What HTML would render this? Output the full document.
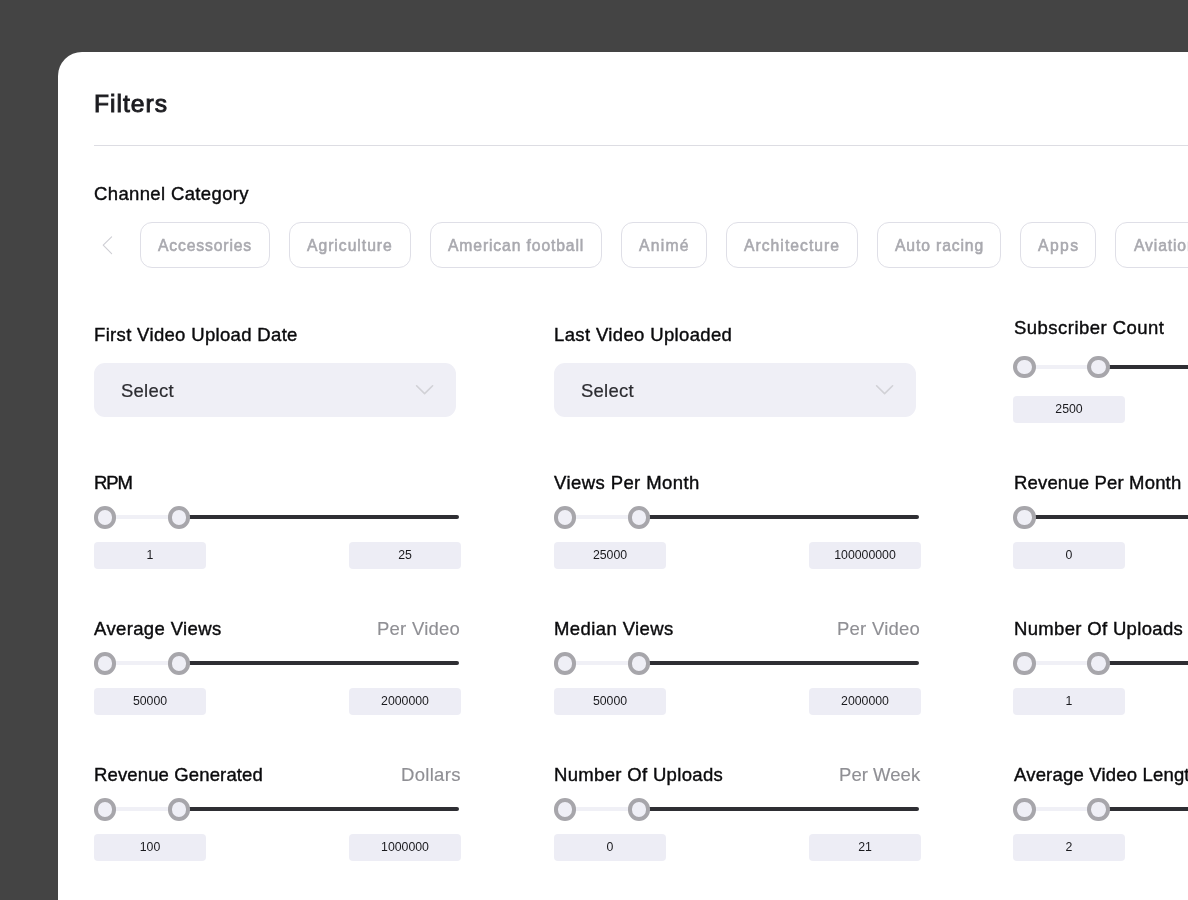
<!DOCTYPE html>
<html><head><meta charset="utf-8">
<style>
*{margin:0;padding:0;box-sizing:border-box}
html,body{width:1188px;height:900px;overflow:hidden;background:#444444;font-family:"Liberation Sans",sans-serif;}
.card{position:absolute;left:58px;top:52px;width:1200px;height:900px;background:#fff;border-radius:24px 0 0 0;}
.abs{position:absolute;white-space:nowrap}
.t{position:absolute;white-space:nowrap;will-change:transform}
.hr{position:absolute;left:94px;top:145px;width:1100px;height:1px;background:#dddde3}
.chip{position:absolute;top:221.7px;height:46.8px;border:1px solid #dfdfe7;border-radius:12px}
.sel{position:absolute;width:362px;height:54px;border-radius:11px;background:#efeff6}
.tl{position:absolute;height:4px;background:#f0f0f6;border-radius:2px}
.td{position:absolute;height:4px;background:#2e2e33;border-radius:2px}
.h{position:absolute;width:22.3px;height:22.3px;border-radius:50%;border:4px solid #a7a6ab;background:#efeff6}
.inp{position:absolute;width:112px;height:27.3px;border-radius:4px;background:#ededf5;font-size:12.3px;color:#1a1a1e;text-align:center;line-height:27px;will-change:transform}
</style></head><body>
<div class="card"></div>
<div class="hr"></div>
<svg class="abs" style="left:100px;top:233px" width="16" height="24" viewBox="0 0 16 24"><path d="M11.6 3.8 L3.2 12.2 L11.6 20.6" fill="none" stroke="#cfcfd5" stroke-width="1.15" stroke-linecap="round" stroke-linejoin="round"/></svg>
<div class="chip" style="left:140px;width:130px"></div>
<div class="chip" style="left:289px;width:122px"></div>
<div class="chip" style="left:430px;width:172px"></div>
<div class="chip" style="left:621px;width:86px"></div>
<div class="chip" style="left:726px;width:132px"></div>
<div class="chip" style="left:877px;width:124px"></div>
<div class="chip" style="left:1020px;width:76px"></div>
<div class="chip" style="left:1115px;width:100px"></div>
<div class="sel" style="left:94px;top:362.5px"></div><svg class="abs" style="left:414px;top:384px" width="20" height="12" viewBox="0 0 20 12"><path d="M2.6 1.8 L10.6 9.6 L18.6 1.8" fill="none" stroke="#d1d1d6" stroke-width="1.6" stroke-linecap="round" stroke-linejoin="round"/></svg>
<div class="sel" style="left:554px;top:362.5px"></div><svg class="abs" style="left:874px;top:384px" width="20" height="12" viewBox="0 0 20 12"><path d="M2.6 1.8 L10.6 9.6 L18.6 1.8" fill="none" stroke="#d1d1d6" stroke-width="1.6" stroke-linecap="round" stroke-linejoin="round"/></svg>
<div class="tl" style="left:1021.4px;top:364.6px;width:80px"></div><div class="td" style="left:1097.4px;top:364.6px;width:281px"></div><div class="h" style="left:1013.4px;top:355.6px"></div><div class="h" style="left:1087.4px;top:355.6px"></div><div class="inp" style="left:1013.4px;top:396.0px">2500</div><div class="inp" style="left:1268.4px;top:396.0px"></div>
<div class="tl" style="left:102px;top:515.3px;width:80px"></div><div class="td" style="left:178px;top:515.3px;width:281px"></div><div class="h" style="left:94px;top:506.29999999999995px"></div><div class="h" style="left:168px;top:506.29999999999995px"></div><div class="inp" style="left:94px;top:542.0px">1</div><div class="inp" style="left:349px;top:542.0px">25</div>
<div class="tl" style="left:561.7px;top:515.3px;width:80px"></div><div class="td" style="left:637.7px;top:515.3px;width:281px"></div><div class="h" style="left:553.7px;top:506.29999999999995px"></div><div class="h" style="left:627.7px;top:506.29999999999995px"></div><div class="inp" style="left:553.7px;top:542.0px">25000</div><div class="inp" style="left:808.7px;top:542.0px">100000000</div>
<div class="tl" style="left:1021.4px;top:515.3px;width:80px"></div><div class="td" style="left:1023.4px;top:515.3px;width:355px"></div><div class="h" style="left:1013.4px;top:506.29999999999995px"></div><div class="inp" style="left:1013.4px;top:542.0px">0</div><div class="inp" style="left:1268.4px;top:542.0px"></div>
<div class="tl" style="left:102px;top:661.3px;width:80px"></div><div class="td" style="left:178px;top:661.3px;width:281px"></div><div class="h" style="left:94px;top:652.3px"></div><div class="h" style="left:168px;top:652.3px"></div><div class="inp" style="left:94px;top:688.0px">50000</div><div class="inp" style="left:349px;top:688.0px">2000000</div>
<div class="tl" style="left:561.7px;top:661.3px;width:80px"></div><div class="td" style="left:637.7px;top:661.3px;width:281px"></div><div class="h" style="left:553.7px;top:652.3px"></div><div class="h" style="left:627.7px;top:652.3px"></div><div class="inp" style="left:553.7px;top:688.0px">50000</div><div class="inp" style="left:808.7px;top:688.0px">2000000</div>
<div class="tl" style="left:1021.4px;top:661.3px;width:80px"></div><div class="td" style="left:1097.4px;top:661.3px;width:281px"></div><div class="h" style="left:1013.4px;top:652.3px"></div><div class="h" style="left:1087.4px;top:652.3px"></div><div class="inp" style="left:1013.4px;top:688.0px">1</div><div class="inp" style="left:1268.4px;top:688.0px"></div>
<div class="tl" style="left:102px;top:807.3px;width:80px"></div><div class="td" style="left:178px;top:807.3px;width:281px"></div><div class="h" style="left:94px;top:798.3px"></div><div class="h" style="left:168px;top:798.3px"></div><div class="inp" style="left:94px;top:834.0px">100</div><div class="inp" style="left:349px;top:834.0px">1000000</div>
<div class="tl" style="left:561.7px;top:807.3px;width:80px"></div><div class="td" style="left:637.7px;top:807.3px;width:281px"></div><div class="h" style="left:553.7px;top:798.3px"></div><div class="h" style="left:627.7px;top:798.3px"></div><div class="inp" style="left:553.7px;top:834.0px">0</div><div class="inp" style="left:808.7px;top:834.0px">21</div>
<div class="tl" style="left:1021.4px;top:807.3px;width:80px"></div><div class="td" style="left:1097.4px;top:807.3px;width:281px"></div><div class="h" style="left:1013.4px;top:798.3px"></div><div class="h" style="left:1087.4px;top:798.3px"></div><div class="inp" style="left:1013.4px;top:834.0px">2</div><div class="inp" style="left:1268.4px;top:834.0px"></div>
<div class="t" style="left:94.20px;top:88.88px;font-size:24.6px;line-height:30px;font-weight:400;color:#1c1c20;letter-spacing:1.008px;-webkit-text-stroke:0.95px #1c1c20;">Filters</div>
<div class="t" style="left:93.80px;top:182.79px;font-size:18.5px;line-height:22px;font-weight:400;color:#0b0b0d;letter-spacing:0.365px;-webkit-text-stroke:0.4px #0b0b0d;">Channel Category</div>
<div class="t" style="left:93.80px;top:323.69px;font-size:18.5px;line-height:22px;font-weight:400;color:#0b0b0d;letter-spacing:0.333px;-webkit-text-stroke:0.4px #0b0b0d;">First Video Upload Date</div>
<div class="t" style="left:553.80px;top:323.69px;font-size:18.5px;line-height:22px;font-weight:400;color:#0b0b0d;letter-spacing:0.359px;-webkit-text-stroke:0.4px #0b0b0d;">Last Video Uploaded</div>
<div class="t" style="left:1013.50px;top:316.89px;font-size:18.5px;line-height:22px;font-weight:400;color:#0b0b0d;letter-spacing:0.471px;-webkit-text-stroke:0.4px #0b0b0d;">Subscriber Count</div>
<div class="t" style="left:93.80px;top:471.89px;font-size:18.5px;line-height:22px;font-weight:400;color:#0b0b0d;letter-spacing:-1.062px;-webkit-text-stroke:0.4px #0b0b0d;">RPM</div>
<div class="t" style="left:553.50px;top:471.89px;font-size:18.5px;line-height:22px;font-weight:400;color:#0b0b0d;letter-spacing:0.414px;-webkit-text-stroke:0.4px #0b0b0d;">Views Per Month</div>
<div class="t" style="left:1013.70px;top:471.89px;font-size:18.5px;line-height:22px;font-weight:400;color:#0b0b0d;letter-spacing:0.166px;-webkit-text-stroke:0.4px #0b0b0d;">Revenue Per Month</div>
<div class="t" style="left:93.50px;top:617.89px;font-size:18.5px;line-height:22px;font-weight:400;color:#0b0b0d;letter-spacing:0.372px;-webkit-text-stroke:0.4px #0b0b0d;">Average Views</div>
<div class="t" style="left:554.00px;top:617.89px;font-size:18.5px;line-height:22px;font-weight:400;color:#0b0b0d;letter-spacing:0.405px;-webkit-text-stroke:0.4px #0b0b0d;">Median Views</div>
<div class="t" style="left:1014.00px;top:617.89px;font-size:18.5px;line-height:22px;font-weight:400;color:#0b0b0d;letter-spacing:0.332px;-webkit-text-stroke:0.4px #0b0b0d;">Number Of Uploads</div>
<div class="t" style="left:94.00px;top:763.89px;font-size:18.5px;line-height:22px;font-weight:400;color:#0b0b0d;letter-spacing:0.136px;-webkit-text-stroke:0.4px #0b0b0d;">Revenue Generated</div>
<div class="t" style="left:554.00px;top:763.89px;font-size:18.5px;line-height:22px;font-weight:400;color:#0b0b0d;letter-spacing:0.332px;-webkit-text-stroke:0.4px #0b0b0d;">Number Of Uploads</div>
<div class="t" style="left:1013.50px;top:763.89px;font-size:18.5px;line-height:22px;font-weight:400;color:#0b0b0d;letter-spacing:0.188px;-webkit-text-stroke:0.4px #0b0b0d;">Average Video Length</div>
<div class="t" style="left:376.80px;top:617.89px;font-size:18.5px;line-height:22px;font-weight:400;color:#8f8f94;letter-spacing:0.247px;-webkit-text-stroke:0.15px #8f8f94;">Per Video</div>
<div class="t" style="left:836.80px;top:617.89px;font-size:18.5px;line-height:22px;font-weight:400;color:#8f8f94;letter-spacing:0.247px;-webkit-text-stroke:0.15px #8f8f94;">Per Video</div>
<div class="t" style="left:400.70px;top:763.89px;font-size:18.5px;line-height:22px;font-weight:400;color:#8f8f94;letter-spacing:0.304px;-webkit-text-stroke:0.15px #8f8f94;">Dollars</div>
<div class="t" style="left:838.50px;top:763.89px;font-size:18.5px;line-height:22px;font-weight:400;color:#8f8f94;letter-spacing:0.044px;-webkit-text-stroke:0.15px #8f8f94;">Per Week</div>
<div class="t" style="left:120.60px;top:380.19px;font-size:18.5px;line-height:22px;font-weight:400;color:#2b2b30;letter-spacing:0.236px;-webkit-text-stroke:0.2px #2b2b30;">Select</div>
<div class="t" style="left:580.60px;top:380.19px;font-size:18.5px;line-height:22px;font-weight:400;color:#2b2b30;letter-spacing:0.236px;-webkit-text-stroke:0.2px #2b2b30;">Select</div>
<div class="t" style="left:158.10px;top:235.56px;font-size:15.7px;line-height:19px;font-weight:400;color:#a9a9af;letter-spacing:0.862px;-webkit-text-stroke:0.55px #a9a9af;">Accessories</div>
<div class="t" style="left:306.90px;top:235.56px;font-size:15.7px;line-height:19px;font-weight:400;color:#a9a9af;letter-spacing:0.982px;-webkit-text-stroke:0.55px #a9a9af;">Agriculture</div>
<div class="t" style="left:447.70px;top:235.56px;font-size:15.7px;line-height:19px;font-weight:400;color:#a9a9af;letter-spacing:0.881px;-webkit-text-stroke:0.55px #a9a9af;">American football</div>
<div class="t" style="left:638.60px;top:235.56px;font-size:15.7px;line-height:19px;font-weight:400;color:#a9a9af;letter-spacing:1.258px;-webkit-text-stroke:0.55px #a9a9af;">Animé</div>
<div class="t" style="left:743.90px;top:235.56px;font-size:15.7px;line-height:19px;font-weight:400;color:#a9a9af;letter-spacing:1.027px;-webkit-text-stroke:0.55px #a9a9af;">Architecture</div>
<div class="t" style="left:894.80px;top:235.56px;font-size:15.7px;line-height:19px;font-weight:400;color:#a9a9af;letter-spacing:0.884px;-webkit-text-stroke:0.55px #a9a9af;">Auto racing</div>
<div class="t" style="left:1037.90px;top:235.56px;font-size:15.7px;line-height:19px;font-weight:400;color:#a9a9af;letter-spacing:1.445px;-webkit-text-stroke:0.55px #a9a9af;">Apps</div>
<div class="t" style="left:1133.50px;top:235.56px;font-size:15.7px;line-height:19px;font-weight:400;color:#a9a9af;letter-spacing:0.881px;-webkit-text-stroke:0.55px #a9a9af;">Aviation</div>
</body></html>
